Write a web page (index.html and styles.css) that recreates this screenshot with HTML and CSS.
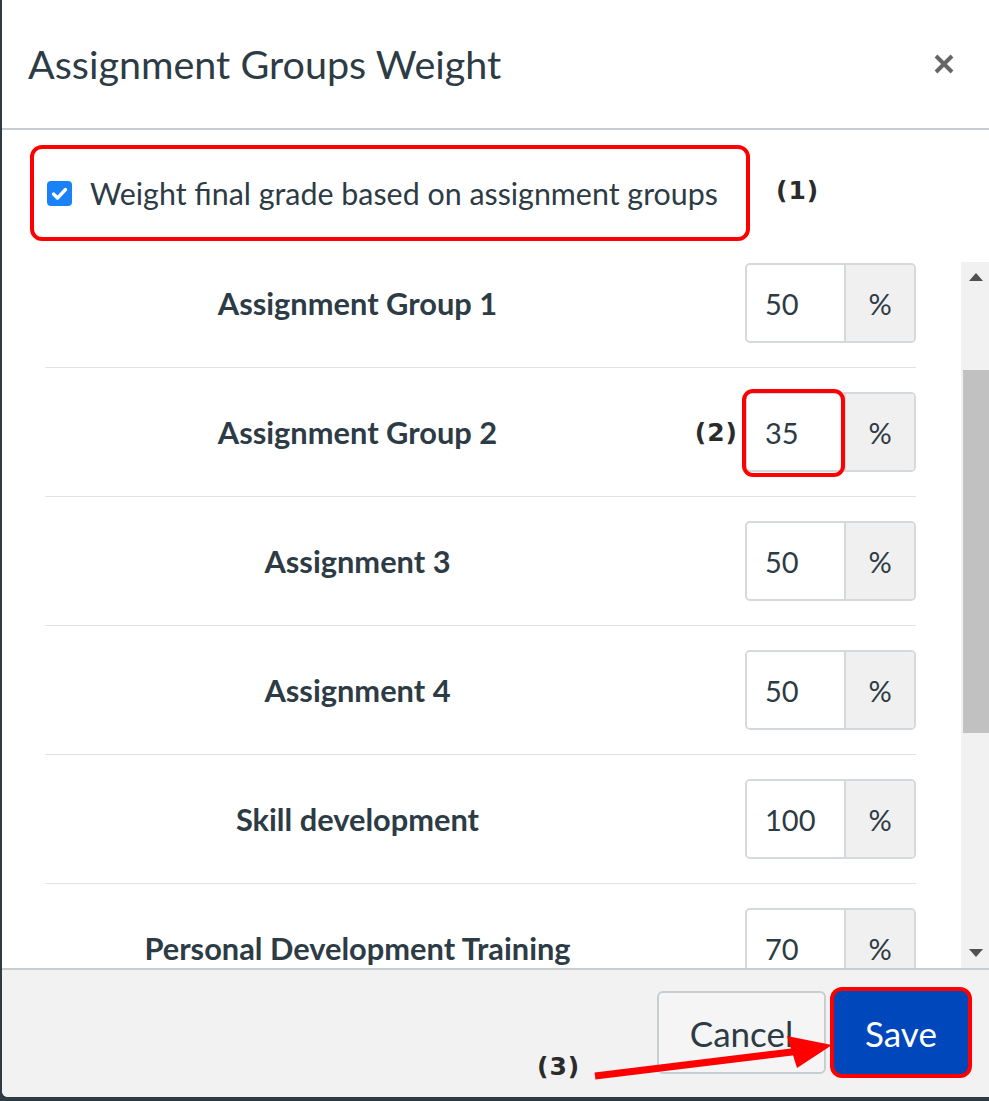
FILE: index.html
```html
<!DOCTYPE html>
<html lang="en">
<head>
<meta charset="utf-8">
<title>Assignment Groups Weight</title>
<link rel="stylesheet" href="styles.css">
</head>
<body>
<div class="dialog">
  <header class="dlg-head">
    <h1 class="dlg-title">Assignment Groups Weight</h1>
    <button class="close" aria-label="Close">
      <svg width="22" height="22" viewBox="0 0 22 22"><path d="M3 3 L19 19 M19 3 L3 19" stroke="#666" stroke-width="4" stroke-linecap="butt"/></svg>
    </button>
  </header>
  <section class="dlg-body">
    <div class="opt-row">
      <label class="opt">
        <span class="cb"><svg width="25" height="25" viewBox="0 0 25 25"><path d="M6.5 13 L10.5 17 L18.5 8.5" fill="none" stroke="#fff" stroke-width="3.4" stroke-linecap="round" stroke-linejoin="round"/></svg></span>
        <span class="opt-text">Weight final grade based on assignment groups</span>
      </label>
      <span class="annot">(1)</span>
    </div>
    <div class="scroller">
      <div class="viewport">
        <ul class="groups">
          <li class="grow"><span class="gname">Assignment Group 1</span><span></span><span class="ig"><span class="ig-in">50</span><span class="ig-add">%</span></span></li>
          <li class="grow"><span class="gname">Assignment Group 2</span><span class="annot annot-2">(2)</span><span class="ig marked"><span class="ig-in">35</span><span class="ig-add">%</span></span></li>
          <li class="grow"><span class="gname">Assignment 3</span><span></span><span class="ig"><span class="ig-in">50</span><span class="ig-add">%</span></span></li>
          <li class="grow"><span class="gname">Assignment 4</span><span></span><span class="ig"><span class="ig-in">50</span><span class="ig-add">%</span></span></li>
          <li class="grow"><span class="gname">Skill development</span><span></span><span class="ig"><span class="ig-in">100</span><span class="ig-add">%</span></span></li>
          <li class="grow"><span class="gname">Personal Development Training</span><span></span><span class="ig"><span class="ig-in">70</span><span class="ig-add">%</span></span></li>
        </ul>
      </div>
      <div class="sbar">
        <span class="sb-btn"><span class="tri-up"></span></span>
        <div class="sb-track"><div class="sb-thumb"></div></div>
        <span class="sb-btn"><span class="tri-down"></span></span>
      </div>
    </div>
  </section>
  <footer class="dlg-foot">
    <span class="annot annot-3">(3)</span>
    <svg class="arrow" width="260" height="50" viewBox="0 0 260 50"><path d="M10 45 L215 20" stroke="#f00" stroke-width="7"/><path d="M247 14 L202 5 L212 37 Z" fill="#f00"/></svg>
    <button class="btn btn-cancel">Cancel</button>
    <button class="btn btn-save">Save</button>
  </footer>
</div>
</body>
</html>
```
FILE: styles.css
```css
* { box-sizing: border-box; }
html, body { margin: 0; padding: 0; }
body {
  background: #2d3b45;
  width: 989px;
  height: 1101px;
  overflow: hidden;
  font-family: Lato, "Open Sans", sans-serif;
  color: #2d3b45;
}
.dialog {
  margin-left: 2px;
  width: 987px;
  height: 1097px;
  background: #fff;
  border-bottom-left-radius: 6px;
  overflow: hidden;
  display: flex;
  flex-direction: column;
}
.dlg-head {
  height: 130px;
  flex: 0 0 130px;
  border-bottom: 2px solid #c7cdd1;
  display: flex;
  align-items: center;
  justify-content: space-between;
  padding: 0 34px 0 26px;
}
.dlg-title {
  margin: 0;
  font-size: 39.5px;
  font-weight: 400;
  letter-spacing: 0;
  color: #2d3b45;
  padding-bottom: 2px;
}
.close {
  background: none;
  border: 0;
  padding: 0;
  width: 22px;
  height: 22px;
  display: flex;
}
.dlg-body {
  flex: 1;
  display: flex;
  flex-direction: column;
  min-height: 0;
}
.opt-row {
  height: 132px;
  flex: 0 0 132px;
  display: flex;
  align-items: flex-start;
  padding: 15px 0 0 28px;
}
.opt {
  display: flex;
  align-items: center;
  height: 96px;
  border: 4px solid #f00;
  border-radius: 12px;
  padding: 0 28px 0 13px;
  font-size: 30.4px;
}
.cb {
  width: 25px;
  height: 25px;
  background: #1a82f7;
  border-radius: 4px;
  display: flex;
  margin-right: 18px;
}
.annot {
  font-family: "DejaVu Sans", "Open Sans", sans-serif;
  font-weight: 700;
  font-size: 25px;
  color: #2b2b2b;
  letter-spacing: 1px;
}
.opt-row .annot {
  margin: 31px 0 0 26px;
}
.scroller {
  flex: 1;
  display: flex;
  min-height: 0;
}
.viewport {
  flex: 1;
  overflow: hidden;
  padding: 0 45px 0 43px;
}
.groups {
  list-style: none;
  margin: -23px 0 0 0;
  padding: 0;
}
.grow {
  display: grid;
  grid-template-columns: 625px 1fr 171px;
  align-items: center;
  padding: 24px 0;
  border-bottom: 1px solid #dfe3e6;
}
.gname {
  text-align: center;
  font-weight: 700;
  font-size: 30.8px;
}
.annot-2 {
  justify-self: end;
  margin-right: 7px;
}
.ig {
  position: relative;
  display: flex;
  height: 80px;
  border: 2px solid #d5d9dc;
  border-radius: 5px;
  font-size: 29px;
}
.ig-in {
  width: 97px;
  background: #fff;
  border-radius: 4px 0 0 4px;
  display: flex;
  align-items: center;
  padding-left: 18px;
}
.ig-add {
  flex: 1;
  background: #f0f0f0;
  border-left: 2px solid #d5d9dc;
  border-radius: 0 4px 4px 0;
  display: flex;
  align-items: center;
  justify-content: center;
}
.ig.marked::after {
  content: "";
  position: absolute;
  top: -5px;
  left: -5px;
  right: 69px;
  bottom: -7px;
  border: 4px solid #f00;
  border-radius: 11px;
}
.sbar {
  width: 28px;
  flex: 0 0 28px;
  background: #f1f1f1;
  display: flex;
  flex-direction: column;
}
.sb-btn {
  height: 30px;
  flex: 0 0 30px;
  display: flex;
  align-items: center;
  justify-content: center;
  padding-left: 2px;
}
.tri-up {
  width: 0; height: 0;
  border-left: 7px solid transparent;
  border-right: 7px solid transparent;
  border-bottom: 8px solid #505050;
}
.tri-down {
  width: 0; height: 0;
  border-left: 7px solid transparent;
  border-right: 7px solid transparent;
  border-top: 8px solid #505050;
}
.sb-track {
  flex: 1;
  padding-left: 2px;
}
.sb-thumb {
  margin-top: 78px;
  height: 363px;
  background: #c1c1c1;
}
.dlg-foot {
  position: relative;
  height: 129px;
  flex: 0 0 129px;
  background: #f2f2f2;
  border-top: 2px solid #c7cdd1;
  display: flex;
  align-items: center;
  justify-content: flex-end;
  padding: 0 21px 2px 0;
  gap: 8px;
}
.btn {
  font-family: Lato, "Open Sans", sans-serif;
  font-size: 35px;
  height: 83px;
  border-radius: 6px;
  padding: 0;
}
.btn-cancel {
  width: 169px;
  background: #f5f5f5;
  border: 2px solid #c7cdd1;
  color: #2d3b45;
}
.btn-save {
  width: 134px;
  background: #0047bb;
  border: 0;
  color: #fff;
  box-shadow: 0 0 0 4px #f00;
  border-radius: 8px;
}
.annot-3 {
  position: absolute;
  left: 535px;
  top: 82px;
}
.arrow {
  position: absolute;
  left: 583px;
  top: 61px;
}
```
